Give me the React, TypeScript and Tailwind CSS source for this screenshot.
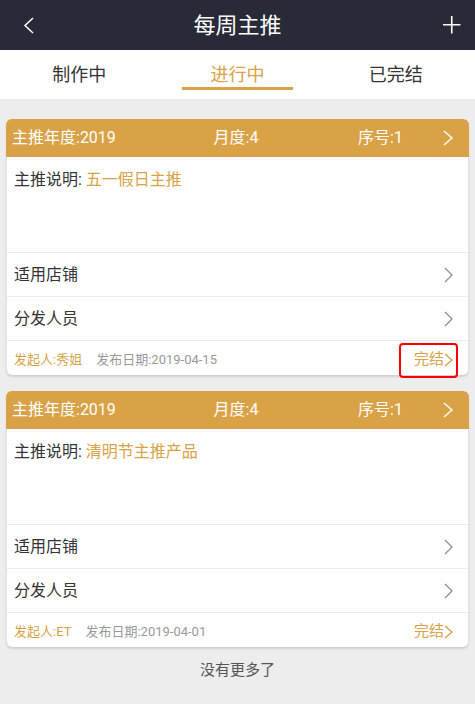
import React from "react";

const font = { fontFamily: 'Roboto, "Noto Sans CJK SC", "Noto Sans", sans-serif' };

function Chevron({ color, w = 10, h = 16, sw = 1.4 }: { color: string; w?: number; h?: number; sw?: number }) {
  return (
    <svg width={w} height={h} viewBox={`0 0 ${w} ${h}`} fill="none">
      <path d={`M1 1 L${w - 1} ${h / 2} L1 ${h - 1}`} stroke={color} strokeWidth={sw} strokeLinejoin="miter" />
    </svg>
  );
}

function Card({ desc, person, date, marked }: { desc: string; person: string; date: string; marked?: boolean }) {
  return (
    <div className="mx-[6px] rounded-[6px] bg-white border-x border-[#e2e2e2] shadow-[0_2px_2px_rgba(0,0,0,0.12)]">
      <div className="h-[38px] bg-[#d9a246] rounded-t-[6px] flex items-center pl-[6px] text-white text-[16px] -mx-px">
        <div className="w-[176px]">主推年度:2019</div>
        <div className="w-[96px] text-center">月度:4</div>
        <div className="ml-[74px]">序号:1</div>
        <div className="ml-auto mr-[16px] flex items-center">
          <Chevron color="#ffffff" w={10} h={16} sw={1.5} />
        </div>
      </div>
      <div className="h-[95px] pt-[11px] pl-[7px] text-[16px] leading-[24px] text-[#333]">
        主推说明: <span className="text-[#d9a246]">{desc}</span>
      </div>
      <div className="h-[44px] border-t border-[#ececec] flex items-center pl-[7px] pr-[15px] text-[16px] text-[#333]">
        <span>适用店铺</span>
        <span className="ml-auto"><Chevron color="#8a8a8a" w={9} h={16} sw={1.2} /></span>
      </div>
      <div className="h-[44px] border-t border-[#ececec] flex items-center pl-[7px] pr-[15px] text-[16px] text-[#333]">
        <span>分发人员</span>
        <span className="ml-auto"><Chevron color="#8a8a8a" w={9} h={16} sw={1.2} /></span>
      </div>
      <div className="relative h-[35px] rounded-b-[6px] border-t border-[#ececec] flex items-center pl-[7px] pr-[15px] pt-[3px] text-[13px]">
        <span className="text-[#d9a246]">发起人:{person}</span>
        <span className="ml-[14px] text-[#999]">{date}</span>
        <span className="ml-auto flex items-center text-[15px] text-[#d9a246]">
          完结
          <Chevron color="#d9a246" w={9} h={14} sw={1.3} />
        </span>
        {marked && (
          <div className="absolute right-[10px] top-[2px] w-[59px] h-[35px] border-[2.5px] border-[#ff0000] rounded-[4px]" />
        )}
      </div>
    </div>
  );
}

export default function App() {
  return (
    <div className="w-[475px] h-[704px] bg-[#ededed] overflow-hidden" style={font}>
      <div className="h-[50px] bg-[#282a37] flex items-center relative">
        <div className="absolute left-[23px] top-[17px]">
          <svg width="11" height="17" viewBox="0 0 11 17" fill="none">
            <path d="M10 1 L2 8.5 L10 16" stroke="#ffffff" strokeWidth="1.5" />
          </svg>
        </div>
        <div className="flex-1 text-center text-white text-[22px]">每周主推</div>
        <div className="absolute left-[443px] top-[16px]">
          <svg width="18" height="18" viewBox="0 0 18 18" fill="none">
            <path d="M0 8.75 H17.5 M8.75 0 V17.5" stroke="#ffffff" strokeWidth="1.6" />
          </svg>
        </div>
      </div>
      <div className="h-[49px] bg-white grid grid-cols-3 text-[18px]">
        <div className="flex items-center justify-center text-[#333]">制作中</div>
        <div className="relative flex items-center justify-center text-[#d9a246]">
          进行中
          <div className="absolute left-[24px] right-[24px] top-[37px] h-[3px] bg-[#d9a246]" />
        </div>
        <div className="flex items-center justify-center text-[#333]">已完结</div>
      </div>
      <div className="pt-[20px] flex flex-col gap-[16px]">
        <Card desc="五一假日主推" person="秀姐" date="发布日期:2019-04-15" marked />
        <Card desc="清明节主推产品" person="ET" date="发布日期:2019-04-01" />
      </div>
      <div className="mt-[11px] text-center text-[15px] leading-[24px] text-[#555]">没有更多了</div>
    </div>
  );
}
